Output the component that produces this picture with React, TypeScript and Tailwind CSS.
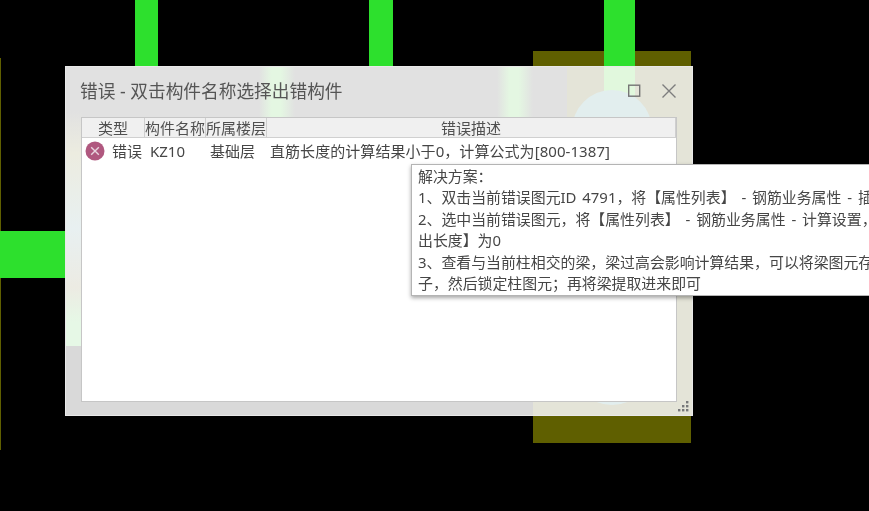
const cjk = "font-['Noto_Sans','Noto_Sans_CJK_SC',sans-serif]";

const columns = [
  { label: "类型", width: "w-[63px]" },
  { label: "构件名称", width: "w-[61px]" },
  { label: "所属楼层", width: "w-[61px]" },
  { label: "错误描述", width: "flex-1" },
];

const tips = [
  "解决方案：",
  "1、双击当前错误图元ID 4791，将【属性列表】 - 钢筋业务属性 - 插筋构造设置，",
  "2、选中当前错误图元，将【属性列表】 - 钢筋业务属性 - 计算设置，修改【插筋弯",
  "出长度】为0",
  "3、查看与当前柱相交的梁，梁过高会影响计算结果，可以将梁图元存盘后删除当前柱",
  "子，然后锁定柱图元；再将梁提取进来即可",
];

// the CAD drawing behind the dialog
const Canvas = () => (
  <svg className="absolute inset-0" width="869" height="511" viewBox="0 0 869 511">
    <rect x="0" y="58" width="1" height="392" fill="#5f5f00" />
    <rect x="533" y="51" width="158" height="392" fill="#5f5f00" />
    <rect x="135" y="0" width="23" height="70" fill="#2de02d" />
    <rect x="369" y="0" width="24" height="70" fill="#2de02d" />
    <rect x="604" y="0" width="31" height="70" fill="#2de02d" />
    <rect x="0" y="231" width="66" height="47" fill="#2de02d" />
  </svg>
);

// what the frosted window lets through from the drawing behind it
const Frost = () => (
  <svg className="absolute inset-0" width="626" height="348" viewBox="0 0 626 348">
    <defs>
      <linearGradient id="band">
        <stop offset="0" stopColor="#e1e1e1" />
        <stop offset="0.35" stopColor="#e4f7e2" />
        <stop offset="0.6" stopColor="#e4f7e2" />
        <stop offset="1" stopColor="#e1e1e1" />
      </linearGradient>
      <linearGradient id="side" x1="0" y1="0" x2="0" y2="1">
        <stop offset="0" stopColor="#e1e1e1" />
        <stop offset="0.18" stopColor="#ecece0" />
        <stop offset="0.5" stopColor="#e8f0f1" />
        <stop offset="0.75" stopColor="#ecebe3" />
        <stop offset="0.9" stopColor="#e6f8e6" />
        <stop offset="1" stopColor="#e6f8e6" />
      </linearGradient>
    </defs>
    <rect x="501" y="0" width="125" height="348" fill="#e4e4d8" />
    <rect x="467" y="334" width="159" height="14" fill="#e4e4d8" />
    <rect x="0" y="334" width="467" height="14" fill="#d9d9d9" />
    <rect x="193" y="0" width="36" height="50" fill="url(#band)" />
    <rect x="431" y="0" width="36" height="50" fill="url(#band)" />
    <rect x="538" y="0" width="31" height="50" fill="#e1f8dd" />
    <circle cx="546" cy="63" r="40" fill="#e2eeee" />
    <circle cx="546" cy="298" r="40" fill="#e2eeee" />
    <rect x="0" y="44" width="16" height="235" fill="url(#side)" />
    <rect x="0" y="279" width="16" height="69" fill="#d9d9d9" />
  </svg>
);

const Grip = () => (
  <svg className="absolute bottom-[3px] right-[3px]" width="11" height="11" viewBox="0 0 11 11" fill="#77787a">
    <rect x="8" y="0" width="2.4" height="2.4" />
    <rect x="4" y="4" width="2.4" height="2.4" />
    <rect x="8" y="4" width="2.4" height="2.4" />
    <rect x="0" y="8" width="2.4" height="2.4" />
    <rect x="4" y="8" width="2.4" height="2.4" />
    <rect x="8" y="8" width="2.4" height="2.4" />
  </svg>
);

const ErrorWindow = () => (
  <div className={`absolute left-[65px] top-[66px] flex h-[350px] w-[628px] flex-col border border-[#e9e9e9] bg-[#e1e1e1] ${cjk}`}>
    <Frost />
    <div className="relative flex h-[50px] shrink-0 items-center justify-between pb-[2px] pl-[14px] pr-[15px]">
      <span className="text-[17.7px] text-[#555555]">错误 - 双击构件名称选择出错构件</span>
      <div className="flex items-center gap-[20px]">
        <svg width="14" height="14" viewBox="0 0 14 14" fill="none" stroke="#757575" strokeWidth="1.4">
          <rect x="1.7" y="1.2" width="11" height="11" />
        </svg>
        <svg width="16" height="16" viewBox="0 0 16 16" fill="none" stroke="#7d7d7d" strokeWidth="1.4">
          <path d="M1.5 1.5 14.5 14.5M14.5 1.5 1.5 14.5" />
        </svg>
      </div>
    </div>
    <div className="relative mx-[15px] flex h-[285px] flex-col border border-[#c6c6c6] bg-white text-[15px] text-[#464646]">
      <div className="flex h-[20px] shrink-0 border-b border-[#d0d0d0] bg-[#f0f0f0] leading-[20px]">
        {columns.map((col) => (
          <div key={col.label} className={`${col.width} whitespace-nowrap border-r border-[#cfcfcf] text-center text-[#505050]`}>
            {col.label}
          </div>
        ))}
      </div>
      <div className="flex h-[26px] items-center whitespace-nowrap">
        <svg className="ml-[3px] shrink-0" width="20" height="20" viewBox="0 0 20 20">
          <circle cx="10" cy="10" r="9.5" fill="#b0587f" />
          <path d="M6.2 6.2 13.8 13.8M13.8 6.2 6.2 13.8" stroke="#e8d5df" strokeWidth="1.4" />
        </svg>
        <span className="ml-[7px] w-[38px] shrink-0">错误</span>
        <span className="w-[60px] shrink-0">KZ10</span>
        <span className="w-[60px] shrink-0">基础层</span>
        <span className="tracking-[0.06px]">直筋长度的计算结果小于0，计算公式为[800-1387]</span>
      </div>
    </div>
    <Grip />
  </div>
);

const Tip = () => (
  <div className={`absolute left-[411px] top-[164px] h-[132px] w-[458px] overflow-hidden whitespace-nowrap border border-r-0 border-[#b4b4b4] bg-white pl-[6px] pt-[1px] text-[14.9px] leading-[21.4px] text-[#464646] shadow-[0_2px_4px_rgba(0,0,0,0.35)] [word-spacing:2px] ${cjk}`}>
    {tips.map((line) => (
      <div key={line}>{line}</div>
    ))}
  </div>
);

export default function App() {
  return (
    <div className="relative h-[511px] w-[869px] overflow-hidden bg-black blur-[0.35px]">
      <Canvas />
      <ErrorWindow />
      <Tip />
    </div>
  );
}
